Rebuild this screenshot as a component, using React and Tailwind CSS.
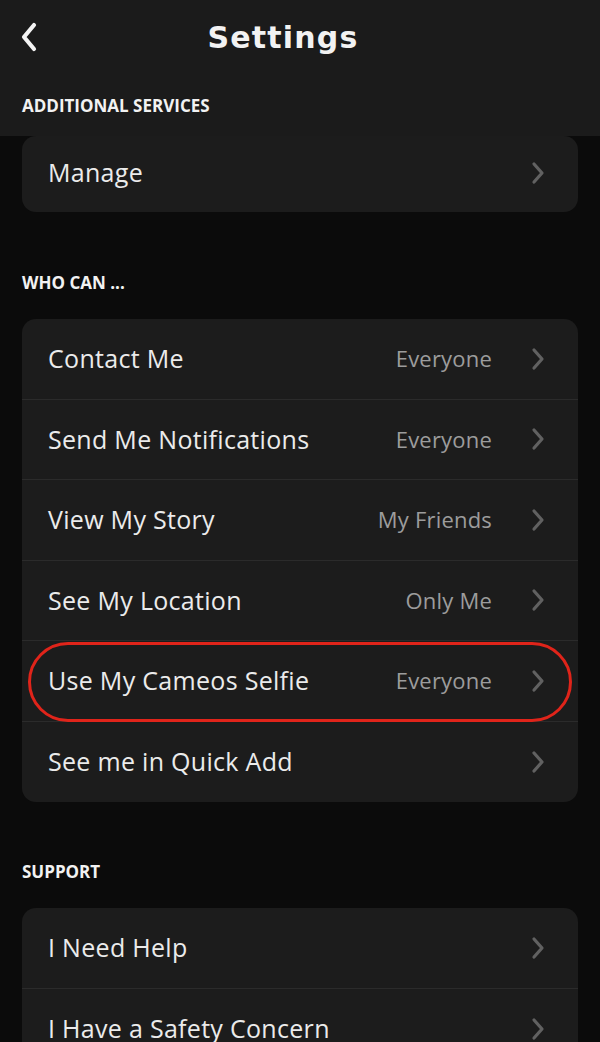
import React from "react";

const Chevron = () => (
  <svg width="16" height="24" viewBox="0 0 16 24" className="shrink-0">
    <path d="M4 3l8 9-8 9" fill="none" stroke="#616161" strokeWidth="3.2" strokeLinecap="round" strokeLinejoin="round" />
  </svg>
);

const Row = ({ label, value, last, circled, tall = true }) => (
  <div
    className={`relative flex items-center ${tall ? "h-[80.5px]" : "h-[76px] pb-[3px]"} pl-[26px] pr-[32px] ${last ? "" : "border-b border-[#2b2b2b]"}`}
  >
    <span className="flex-1 text-[25px] text-[#ebebeb] tracking-[0.3px]">{label}</span>
    {value && <span className="text-[22px] text-[#9c9c9c] tracking-[0.2px] mr-[38px]">{value}</span>}
    <Chevron />
    {circled && (
      <div className="absolute left-[6px] right-[6px] top-[1px] bottom-[-1px] rounded-full border-[3px] border-[#e0241a]" />
    )}
  </div>
);

const Heading = ({ children }) => (
  <div className="px-[22px] text-[17px] leading-[24px] font-bold text-[#f2f2f2]">{children}</div>
);

const Card = ({ children }) => <div className="mx-[22px] rounded-[14px] bg-[#1c1c1c]">{children}</div>;

export default function App() {
  return (
    <div className="w-[600px] h-[1042px] overflow-hidden bg-[#0b0b0b] font-['Open_Sans',sans-serif]">
      <div className="bg-[#1b1b1b] h-[136px] flex flex-col">
        <div className="relative h-[74px] flex items-center justify-center pr-[34px]">
          <svg width="24" height="34" viewBox="0 0 24 34" className="absolute left-[17px] top-[20px]">
            <path d="M17 5L7 17l10 12" fill="none" stroke="#f4f4f4" strokeWidth="4.2" strokeLinecap="round" strokeLinejoin="round" />
          </svg>
          <span className="text-[30px] font-bold text-[#f2f2f2] tracking-[1.2px] font-['DejaVu_Sans',sans-serif]">Settings</span>
        </div>
        <div className="pt-[20px]">
          <Heading>ADDITIONAL SERVICES</Heading>
        </div>
      </div>

      <Card>
        <Row label="Manage" last tall={false} />
      </Card>

      <div className="pt-[59px] pb-[24px]">
        <Heading>WHO CAN ...</Heading>
      </div>
      <Card>
        <Row label="Contact Me" value="Everyone" />
        <Row label="Send Me Notifications" value="Everyone" />
        <Row label="View My Story" value="My Friends" />
        <Row label="See My Location" value="Only Me" />
        <Row label="Use My Cameos Selfie" value="Everyone" circled />
        <Row label="See me in Quick Add" last />
      </Card>

      <div className="pt-[58px] pb-[24px]">
        <Heading>SUPPORT</Heading>
      </div>
      <Card>
        <Row label="I Need Help" />
        <Row label="I Have a Safety Concern" last />
      </Card>
    </div>
  );
}
